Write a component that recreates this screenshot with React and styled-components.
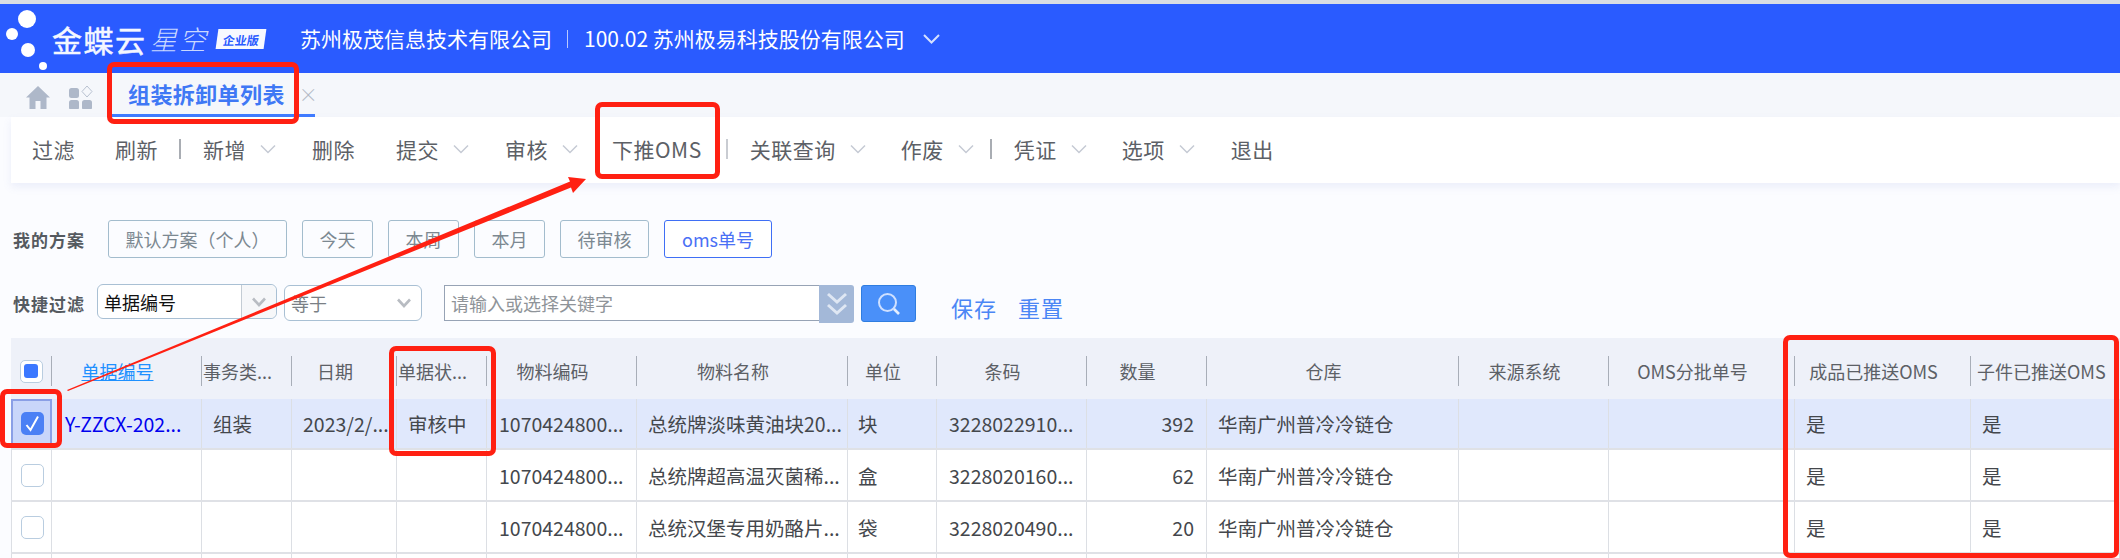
import React from "react"
import styled, { createGlobalStyle } from "styled-components"

const GlobalStyle = createGlobalStyle`
    html, body {
        margin: 0;
        padding: 0;
        background: #fbfcff;
        font-family: "Noto Sans CJK SC", "Liberation Sans", sans-serif;
    }
    * {
        box-sizing: border-box;
    }
`;

const COLUMNS = "41px 150px 90px 105px 90px 150px 211px 89px 150px 120px 252px 150px 186px 176px 149px";

const Page = styled.div`
    position: relative;
    width: 2120px;
    height: 558px;
    overflow: hidden;
    border-top: 4px solid #d9dde3;
`;

const TopBar = styled.header`
    display: flex;
    align-items: center;
    height: 69px;
    background: #2a5bff;
    color: #fff;
`;

const LogoWord = styled.span`
    font-size: 30px;
    font-weight: 400;
    -webkit-text-stroke: 0.5px #f4f7ff;
    letter-spacing: 1.5px;
    line-height: 1;
    width: 98px;
    color: #f4f7ff;
`;

const LogoSub = styled.span`
    font-size: 27px;
    font-weight: 300;
    font-style: italic;
    letter-spacing: 2px;
    line-height: 1;
    width: 67px;
    color: #c9d8ff;
`;

const Badge = styled.span`
    display: flex;
    align-items: center;
    justify-content: center;
    width: 48px;
    height: 20px;
    background: #f7f9ff;
    color: #2a5bff;
    font-size: 12px;
    font-weight: 700;
    transform: skewX(-8deg);
    margin-right: 35px;
`;

const Company = styled.span`
    font-size: 21px;
    line-height: 1;
    white-space: nowrap;
`;

const TopDivider = styled.span`
    width: 1px;
    height: 18px;
    background: #b9c9ff;
    margin: 0 16px 0 15px;
`;

const TabBar = styled.nav`
    display: flex;
    align-items: flex-end;
    height: 44px;
    padding-left: 26px;
    background: #f5f7fb;
`;

const TabIcon = styled.svg`
    width: 24px;
    height: 24px;
    margin: 0 19px 8px 0;
`;

const Tab = styled.div`
    display: flex;
    align-items: center;
    width: 203px;
    height: 41px;
    padding: 0 0 4px 16px;
    border-bottom: 3px solid #3f7bff;
`;

const TabTitle = styled.span`
    font-size: 22px;
    font-weight: 700;
    letter-spacing: 0.4px;
    color: #3f78f5;
    white-space: nowrap;
`;

const TabClose = styled.span`
    font-size: 19px;
    font-weight: 300;
    color: #b4bac6;
    margin-left: 14px;
`;

const Toolbar = styled.div`
    display: flex;
    align-items: center;
    height: 66px;
    margin-left: 11px;
    padding: 0 0 2px 21px;
    background: #fff;
    box-shadow: 0 4px 8px rgba(120, 140, 210, 0.12);
`;

const ToolItem = styled.span`
    display: flex;
    align-items: center;
    margin-right: ${p => p.$gap}px;
    font-size: 21px;
    letter-spacing: 0.5px;
    color: #5c6066;
    white-space: nowrap;
`;

const ToolChevron = styled.svg`
    width: 16px;
    height: 10px;
    margin-left: 14px;
`;

const ToolDivider = styled.span`
    width: 2px;
    height: 20px;
    background: ${p => p.$light ? "#c9ccd2" : "#a9adb3"};
    margin-right: 22px;
`;

const SchemeRow = styled.div`
    display: flex;
    align-items: center;
    height: 38px;
    margin-top: 37px;
    padding-left: 13px;
`;

const RowLabel = styled.span`
    width: ${p => p.$width}px;
    font-size: 17px;
    font-weight: 700;
    letter-spacing: 1px;
    color: #555a60;
    white-space: nowrap;
`;

const SchemeButton = styled.button`
    width: ${p => p.$width}px;
    height: 38px;
    margin-right: 15px;
    padding: 0;
    font-family: inherit;
    font-size: 18px;
    color: ${p => p.$active ? "#4a70f5" : "#7c8891"};
    background: ${p => p.$active ? "#fff" : "transparent"};
    border: 1px solid ${p => p.$active ? "#3f6ff5" : "#a3bccd"};
    border-radius: 3px;
`;

const FilterRow = styled.div`
    display: flex;
    align-items: flex-start;
    height: 38px;
    margin-top: 26px;
    padding-left: 13px;
`;

const FilterLabel = styled(RowLabel)`
    align-self: center;
`;

const Select = styled.div`
    display: flex;
    align-items: center;
    width: ${p => p.$width}px;
    height: ${p => p.$height}px;
    margin: ${p => p.$top}px 7px 0 0;
    padding-left: 6px;
    font-size: 18px;
    color: ${p => p.$muted ? "#7a7f85" : "#111"};
    background: #fff;
    border: 1px solid #a9c0d4;
    border-radius: 6px;
`;

const SelectValue = styled.span`
    flex: 1;
    white-space: nowrap;
`;

const SelectArrow = styled.span`
    display: flex;
    align-items: center;
    justify-content: center;
    align-self: stretch;
    width: 35px;
    border-left: ${p => p.$split ? "1px solid #c4ccd4" : "none"};
    background: ${p => p.$split ? "#f6f7f9" : "transparent"};
    border-radius: 0 6px 6px 0;
`;

const KeywordInput = styled.div`
    display: flex;
    align-items: center;
    width: 375px;
    height: 36px;
    margin: 1px 0 0 15px;
    padding-left: 6px;
    font-size: 18px;
    color: #8f9499;
    background: #fff;
    border: 1px solid #97a3b5;
    border-right: none;
`;

const ExpandButton = styled.div`
    display: flex;
    align-items: center;
    justify-content: center;
    width: 35px;
    height: 38px;
    margin-top: 1px;
    background: #a3b8d8;
    border-radius: 0 3px 3px 0;
`;

const SearchButton = styled.div`
    display: flex;
    align-items: center;
    justify-content: center;
    width: 55px;
    height: 37px;
    margin: 1px 35px 0 7px;
    background: #4a90f9;
    border: 1px solid #2f7de0;
    border-radius: 3px;
`;

const FilterLink = styled.span`
    margin: 5px 21px 0 0;
    font-size: 22px;
    letter-spacing: 1px;
    line-height: 36px;
    color: #4b86f5;
    white-space: nowrap;
`;

const Table = styled.div`
    margin: 16px 0 0 11px;
`;

const HeadRow = styled.div`
    display: grid;
    grid-template-columns: ${COLUMNS};
    height: 61px;
    background: #eef1f9;
`;

const HeadCell = styled.div`
    display: flex;
    align-items: center;
    justify-content: ${p => p.$flush ? "flex-start" : "center"};
    margin: 18px 0 13px;
    padding: ${p => p.$flush ? `0 0 0 ${p.$flush}px` : "0 18px 0 0"};
    border-right: ${p => p.$last ? "none" : "1px solid #a8aeb8"};
    font-size: 18px;
    color: ${p => p.$link ? "#1e90ff" : "#5c6066"};
    text-decoration: ${p => p.$link ? "underline" : "none"};
    white-space: nowrap;
    overflow: hidden;
`;

const Row = styled.div`
    display: grid;
    grid-template-columns: ${COLUMNS};
    height: ${p => p.$height}px;
    background: ${p => p.$selected ? "#e0e8fc" : "#fff"};
    border-bottom: 2px solid #dfe1e6;
`;

const Cell = styled.div`
    display: flex;
    align-items: center;
    justify-content: ${p => p.$right ? "flex-end" : "flex-start"};
    padding: 0 ${p => p.$pad}px;
    border-right: 1px solid #dcdfe4;
    font-size: 19.5px;
    color: ${p => p.$link ? "#0000ee" : "#44474c"};
    white-space: nowrap;
    overflow: hidden;
`;

const CheckCell = styled.div`
    display: flex;
    align-items: center;
    justify-content: center;
    padding-left: 1px;
    border-left: 1px solid #dcdfe4;
    border-right: 1px solid #dcdfe4;
    ${p => p.$selected && `
        background: #c9d6fa;
        border: 2px solid #8a9fe6;
    `}
`;

const HeadCheckCell = styled.div`
    display: flex;
    align-items: center;
    justify-content: center;
    margin: 18px 0 13px;
    border-right: 1px solid #a8aeb8;
`;

const Checkbox = styled.span`
    display: flex;
    align-items: center;
    justify-content: center;
    width: 23px;
    height: 23px;
    background: ${p => p.$checked ? "#4b80f5" : "#fff"};
    border: ${p => p.$checked ? "none" : "1px solid #b9cde0"};
    border-radius: 5px;
`;

const HalfMark = styled.span`
    width: 14px;
    height: 14px;
    background: #3b78ff;
    border-radius: 3px;
`;

// red annotations drawn over the screenshot
const Marker = styled.div`
    position: absolute;
    left: ${p => p.$x}px;
    top: ${p => p.$y}px;
    width: ${p => p.$w}px;
    height: ${p => p.$h}px;
    border: 5px solid #ff2012;
    border-radius: 7px;
    pointer-events: none;
`;

const ArrowLayer = styled.svg`
    position: absolute;
    left: 0;
    top: -4px;
    width: 2120px;
    height: 558px;
    pointer-events: none;
`;

const tools = [
    { label: "过滤", gap: 40 },
    { label: "刷新", gap: 21 },
    { divider: true },
    { label: "新增", chevron: true, gap: 36 },
    { label: "删除", gap: 41 },
    { label: "提交", chevron: true, gap: 36 },
    { label: "审核", chevron: true, gap: 34 },
    { label: "下推OMS", gap: 24 },
    { divider: true, light: true },
    { label: "关联查询", chevron: true, gap: 35 },
    { label: "作废", chevron: true, gap: 16 },
    { divider: true },
    { label: "凭证", chevron: true, gap: 35 },
    { label: "选项", chevron: true, gap: 36 },
    { label: "退出", gap: 0 },
]

const schemes = [
    { label: "默认方案（个人）", width: 179 },
    { label: "今天", width: 71 },
    { label: "本周", width: 71 },
    { label: "本月", width: 71 },
    { label: "待审核", width: 89 },
    { label: "oms单号", width: 108, active: true },
]

const heads = [
    { label: "单据编号", link: true },
    { label: "事务类...", flush: 1 },
    { label: "日期" },
    { label: "单据状...", flush: 1 },
    { label: "物料编码" },
    { label: "物料名称" },
    { label: "单位" },
    { label: "条码" },
    { label: "数量" },
    { label: "仓库" },
    { label: "来源系统" },
    { label: "OMS分批单号" },
    { label: "成品已推送OMS" },
    { label: "子件已推送OMS", flush: 6, last: true },
]

const rows = [
    { height: 51, selected: true, bill: "Y-ZZCX-202...", kind: "组装", date: "2023/2/...", status: "审核中", code: "1070424800...", name: "总统牌淡味黄油块20...", unit: "块", bar: "3228022910...", qty: 392 },
    { height: 52, code: "1070424800...", name: "总统牌超高温灭菌稀...", unit: "盒", bar: "3228020160...", qty: 62 },
    { height: 52, code: "1070424800...", name: "总统汉堡专用奶酪片...", unit: "袋", bar: "3228020490...", qty: 20 },
    { height: 52 },
]

const Chevron = () => (
    <ToolChevron viewBox="0 0 16 10">
        <path d="M1 1.5 L8 8.5 L15 1.5" fill="none" stroke="#c5cad4" strokeWidth="1.5" />
    </ToolChevron>
)

const SelectChevron = () => (
    <svg width="16" height="10" viewBox="0 0 16 10">
        <path d="M2 1.5 L8 8 L14 1.5" fill="none" stroke="#b8bcc2" strokeWidth="2.6" />
    </svg>
)

const App = () => {
    return (
        <Page>
            <GlobalStyle />

            <TopBar>
                <svg width="52" height="69" viewBox="0 0 52 69">
                    <circle cx="27" cy="15" r="9" fill="#fff" />
                    <circle cx="12" cy="30" r="6" fill="#fff" />
                    <circle cx="28" cy="46" r="7" fill="#fff" />
                    <circle cx="43" cy="62" r="4" fill="#fff" />
                </svg>
                <LogoWord>金蝶云</LogoWord>
                <LogoSub>星空</LogoSub>
                <Badge>企业版</Badge>
                <Company>苏州极茂信息技术有限公司</Company>
                <TopDivider />
                <Company>100.02 苏州极易科技股份有限公司</Company>
                <svg width="17" height="10" viewBox="0 0 17 10" style={{ marginLeft: 18 }}>
                    <path d="M1 1 L8.5 8.5 L16 1" fill="none" stroke="#d5e0ff" strokeWidth="2" />
                </svg>
            </TopBar>

            <TabBar>
                <TabIcon viewBox="0 0 24 24">
                    <path d="M12 1 L24 12.5 L20.5 12.5 L20.5 24 L14.5 24 L14.5 16 L9.5 16 L9.5 24 L3.5 24 L3.5 12.5 L0 12.5 Z" fill="#aeb8c9" />
                </TabIcon>
                <TabIcon viewBox="0 0 24 24">
                    <rect x="0" y="3" width="10" height="10" rx="2.5" fill="#aeb8c9" />
                    <rect x="0" y="15" width="10" height="10" rx="2.5" fill="#aeb8c9" />
                    <rect x="13" y="15" width="10" height="10" rx="2.5" fill="#aeb8c9" />
                    <path d="M18 1 L23 6.5 L18 12 L13 6.5 Z" fill="none" stroke="#b9c2d1" strokeWidth="1" />
                </TabIcon>
                <Tab>
                    <TabTitle>组装拆卸单列表</TabTitle>
                    <TabClose>×</TabClose>
                </Tab>
            </TabBar>

            <Toolbar>
                {tools.map((tool, i) => tool.divider ? (
                    <ToolDivider key={i} $light={tool.light} />
                ) : (
                    <ToolItem key={i} $gap={tool.gap}>
                        {tool.label}
                        {tool.chevron && <Chevron />}
                    </ToolItem>
                ))}
            </Toolbar>

            <SchemeRow>
                <RowLabel $width={95}>我的方案</RowLabel>
                {schemes.map(s => (
                    <SchemeButton key={s.label} $width={s.width} $active={s.active}>{s.label}</SchemeButton>
                ))}
            </SchemeRow>

            <FilterRow>
                <FilterLabel $width={84}>快捷过滤</FilterLabel>
                <Select $width={180} $height={35} $top={0}>
                    <SelectValue>单据编号</SelectValue>
                    <SelectArrow $split><SelectChevron /></SelectArrow>
                </Select>
                <Select $width={138} $height={36} $top={1} $muted>
                    <SelectValue>等于</SelectValue>
                    <SelectArrow><SelectChevron /></SelectArrow>
                </Select>
                <KeywordInput>请输入或选择关键字</KeywordInput>
                <ExpandButton>
                    <svg width="22" height="26" viewBox="0 0 22 26">
                        <path d="M2 3 L11 11 L20 3 M2 14 L11 22 L20 14" fill="none" stroke="#dfe7f3" strokeWidth="3" />
                    </svg>
                </ExpandButton>
                <SearchButton>
                    <svg width="24" height="24" viewBox="0 0 24 24">
                        <circle cx="10.5" cy="10.5" r="8.5" fill="none" stroke="#cfe0ff" strokeWidth="2" />
                        <path d="M17 17 L22 22" stroke="#e4eeff" strokeWidth="2.6" />
                    </svg>
                </SearchButton>
                <FilterLink>保存</FilterLink>
                <FilterLink>重置</FilterLink>
            </FilterRow>

            <Table>
                <HeadRow>
                    <HeadCheckCell>
                        <Checkbox><HalfMark /></Checkbox>
                    </HeadCheckCell>
                    {heads.map(h => (
                        <HeadCell key={h.label} $link={h.link} $flush={h.flush} $last={h.last}>{h.label}</HeadCell>
                    ))}
                </HeadRow>
                {rows.map((r, i) => (
                    <Row key={i} $height={r.height} $selected={r.selected}>
                        <CheckCell $selected={r.selected}>
                            {i < 3 && (
                                <Checkbox $checked={r.selected}>
                                    {r.selected && (
                                        <svg width="15" height="17" viewBox="0 0 15 17">
                                            <path d="M1.5 10 L5.5 15 L13 1.5" fill="none" stroke="#fff" strokeWidth="2" />
                                        </svg>
                                    )}
                                </Checkbox>
                            )}
                        </CheckCell>
                        <Cell $pad={13} $link>{r.bill}</Cell>
                        <Cell $pad={11}>{r.kind}</Cell>
                        <Cell $pad={11}>{r.date}</Cell>
                        <Cell $pad={11}>{r.status}</Cell>
                        <Cell $pad={12}>{r.code}</Cell>
                        <Cell $pad={11}>{r.name}</Cell>
                        <Cell $pad={10}>{r.unit}</Cell>
                        <Cell $pad={12}>{r.bar}</Cell>
                        <Cell $pad={12} $right>{r.qty}</Cell>
                        <Cell $pad={11}>{r.code && "华南广州普冷冷链仓"}</Cell>
                        <Cell $pad={11} />
                        <Cell $pad={11} />
                        <Cell $pad={11}>{r.code && "是"}</Cell>
                        <Cell $pad={11}>{r.code && "是"}</Cell>
                    </Row>
                ))}
            </Table>

            <Marker $x={107} $y={58} $w={192} $h={62} />
            <Marker $x={595} $y={98} $w={125} $h={77} />
            <Marker $x={0} $y={385} $w={62} $h={59} />
            <Marker $x={389} $y={342} $w={107} $h={110} />
            <Marker $x={1783} $y={331} $w={336} $h={223} />
            <ArrowLayer viewBox="0 0 2120 558">
                <path d="M68 391 L67 390 L570 181.5 L568 177 L586 179 L573 193 L571 187.5 Z" fill="#ff2012" />
            </ArrowLayer>
        </Page>
    )
}

export default App
